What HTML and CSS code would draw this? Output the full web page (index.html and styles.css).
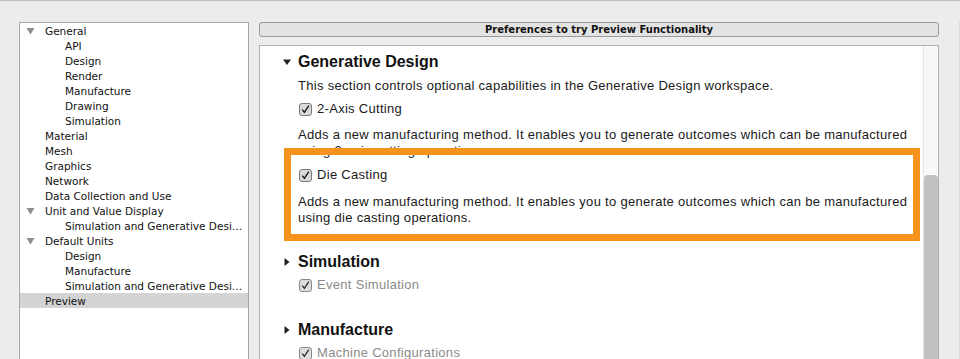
FILE: index.html
```html
<!DOCTYPE html>
<html>
<head>
<meta charset="utf-8">
<link rel="stylesheet" href="styles.css">
</head>
<body>
<div class="window">
  <div class="tree">
    <div class="row parent"><svg class="twisty" width="9" height="8" viewBox="0 0 9 8"><path d="M0.5 1 L8.5 1 L4.5 7.5 Z" fill="#8c8c8c"/></svg>General</div>
    <div class="row child">API</div>
    <div class="row child">Design</div>
    <div class="row child">Render</div>
    <div class="row child">Manufacture</div>
    <div class="row child">Drawing</div>
    <div class="row child">Simulation</div>
    <div class="row top">Material</div>
    <div class="row top">Mesh</div>
    <div class="row top">Graphics</div>
    <div class="row top">Network</div>
    <div class="row top">Data Collection and Use</div>
    <div class="row parent"><svg class="twisty" width="9" height="8" viewBox="0 0 9 8"><path d="M0.5 1 L8.5 1 L4.5 7.5 Z" fill="#8c8c8c"/></svg>Unit and Value Display</div>
    <div class="row child">Simulation and Generative Desi…</div>
    <div class="row parent"><svg class="twisty" width="9" height="8" viewBox="0 0 9 8"><path d="M0.5 1 L8.5 1 L4.5 7.5 Z" fill="#8c8c8c"/></svg>Default Units</div>
    <div class="row child">Design</div>
    <div class="row child">Manufacture</div>
    <div class="row child">Simulation and Generative Desi…</div>
    <div class="row top selected">Preview</div>
  </div>
  <div class="main">
    <div class="title-bar">Preferences to try Preview Functionality</div>
    <div class="content">
      <div class="sections">
        <div class="section">
          <div class="heading"><svg class="arrow" width="8" height="8" viewBox="0 0 8 8"><path d="M0 1.5 L8 1.5 L4 7 Z" fill="#222"/></svg>Generative Design</div>
          <div class="body">
            <p class="desc intro">This section controls optional capabilities in the Generative Design workspace.</p>
            <div class="item first">
              <div class="check"><svg class="cb" width="13" height="13" viewBox="0 0 13 13"><rect x="0.5" y="0.5" width="12" height="12" rx="2.5" fill="#d9d9d9" stroke="#7a7a7a"/><path d="M3.2 6.6 L5.4 9.3 L9.8 2.6" fill="none" stroke="#1a1a1a" stroke-width="1.4"/></svg>2-Axis Cutting</div>
              <p class="desc">Adds a new manufacturing method. It enables you to generate outcomes which can be manufactured using 2-axis cutting operations.</p>
            </div>
            <div class="item second">
              <div class="highlight"></div>
              <div class="check"><svg class="cb" width="13" height="13" viewBox="0 0 13 13"><rect x="0.5" y="0.5" width="12" height="12" rx="2.5" fill="#d9d9d9" stroke="#7a7a7a"/><path d="M3.2 6.6 L5.4 9.3 L9.8 2.6" fill="none" stroke="#1a1a1a" stroke-width="1.4"/></svg>Die Casting</div>
              <p class="desc">Adds a new manufacturing method. It enables you to generate outcomes which can be manufactured using die casting operations.</p>
            </div>
          </div>
        </div>
        <div class="section collapsed">
          <div class="heading"><svg class="arrow" width="8" height="8" viewBox="0 0 8 8"><path d="M1.5 0 L6.5 4 L1.5 8 Z" fill="#222"/></svg>Simulation</div>
          <div class="body">
            <div class="check disabled"><svg class="cb" width="13" height="13" viewBox="0 0 13 13"><rect x="0.5" y="0.5" width="12" height="12" rx="2.5" fill="#dedede" stroke="#8a8a8a"/><path d="M3.2 6.6 L5.4 9.3 L9.8 2.6" fill="none" stroke="#333" stroke-width="1.4"/></svg>Event Simulation</div>
          </div>
        </div>
        <div class="section collapsed">
          <div class="heading"><svg class="arrow" width="8" height="8" viewBox="0 0 8 8"><path d="M1.5 0 L6.5 4 L1.5 8 Z" fill="#222"/></svg>Manufacture</div>
          <div class="body">
            <div class="check disabled"><svg class="cb" width="13" height="13" viewBox="0 0 13 13"><rect x="0.5" y="0.5" width="12" height="12" rx="2.5" fill="#dedede" stroke="#8a8a8a"/><path d="M3.2 6.6 L5.4 9.3 L9.8 2.6" fill="none" stroke="#333" stroke-width="1.4"/></svg>Machine Configurations</div>
          </div>
        </div>
      </div>
      <div class="scrollbar"><div class="thumb"></div></div>
    </div>
  </div>
  <div class="edge"></div>
</div>
</body>
</html>
```

FILE: styles.css
```css
html, body {
  margin: 0;
  padding: 0;
  height: 100%;
  overflow: hidden;
}
body {
  background: #ececec;
  border-top: 1px solid #bdbdbd;
  box-sizing: border-box;
  font-family: "DejaVu Sans", sans-serif;
  color: #111;
}
.window {
  display: flex;
  height: 100%;
  padding: 21px 0 0 19px;
  box-sizing: border-box;
}
.tree {
  width: 230px;
  flex: none;
  background: #fff;
  border: 1px solid #a6a6a6;
  border-bottom: none;
  box-sizing: border-box;
  font-family: "DejaVu Sans", sans-serif;
  font-size: 10.5px;
  color: #111;
}
.row {
  height: 15px;
  line-height: 15px;
  padding-top: 1px;
  box-sizing: border-box;
  white-space: nowrap;
  overflow: hidden;
  text-overflow: ellipsis;
  display: flex;
  align-items: center;
}
.row.top { padding-left: 25px; }
.row.child { padding-left: 45px; }
.row.parent { padding-left: 6px; }
.row .twisty { margin-right: 10px; flex: none; }
.row.selected { background: #d4d4d4; }
.main {
  margin-left: 10px;
  width: 680px;
  flex: none;
  display: flex;
  flex-direction: column;
}
.title-bar {
  height: 15px;
  line-height: 14px;
  border: 1px solid #9a9a9a;
  border-radius: 3px;
  background: #e3e3e3;
  text-align: center;
  font-family: "DejaVu Sans", sans-serif;
  font-weight: bold;
  font-size: 10px;
  color: #111;
  box-sizing: border-box;
}
.content {
  margin-top: 8px;
  flex: 1;
  background: #fff;
  border: 1px solid #b0b0b0;
  border-bottom: none;
  display: flex;
  position: relative;
}
.sections {
  flex: 1;
  padding: 6px 0 0 23px;
  font-family: "Liberation Sans", sans-serif;
  font-size: 13px;
  color: #1a1a1a;
}
.heading {
  display: flex;
  align-items: center;
  height: 20px;
  font-size: 16px;
  font-weight: bold;
  color: #111;
}
.heading .arrow { margin-right: 7px; flex: none; }
.body { padding-left: 15px; letter-spacing: 0.3px; }
.desc {
  margin: 0;
  line-height: 16px;
  padding-right: 4px;
}
.desc.intro { margin-top: 6px; }
.check {
  display: flex;
  align-items: center;
  height: 16px;
  line-height: 16px;
}
.check .cb { margin-left: 1px; margin-right: 5px; flex: none; }
.check.disabled { color: #8a8a8a; }
.item.first .check { margin-top: 7px; }
.item.first .desc { margin-top: 10px; }
.item.second { position: relative; }
.item.second .check { margin-top: 8px; }
.item.second .desc { margin-top: 11px; }
.highlight {
  position: absolute;
  left: -14px;
  top: -19px;
  width: 636px;
  height: 93px;
  border: 7px solid #f6921e;
  box-sizing: border-box;
  pointer-events: none;
}
.section.collapsed { margin-top: 26px; }
.section.collapsed + .section.collapsed { margin-top: 27px; }
.section.collapsed .check { margin-top: 5px; }
.scrollbar {
  width: 14px;
  flex: none;
  background: #f8f8f8;
  border-left: 1px solid #e4e4e4;
  display: flex;
  justify-content: center;
}
.thumb {
  margin-top: 129px;
  width: 7px;
  flex: 1;
  background: #c2c2c2;
  border-radius: 4px 4px 0 0;
}
.edge {
  margin-left: auto;
  width: 1px;
  background: #d8d8d8;
}
```
